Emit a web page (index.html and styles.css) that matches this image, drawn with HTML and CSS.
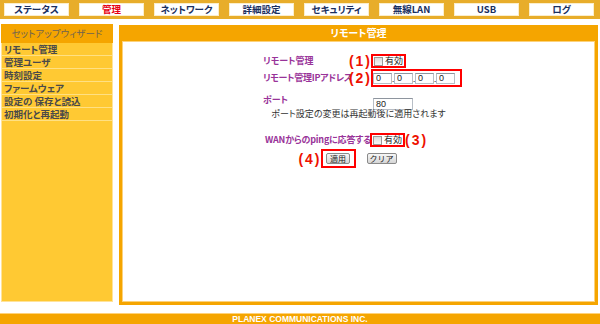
FILE: index.html
```html
<!DOCTYPE html>
<html lang="ja">
<head>
  <meta charset="UTF-8" />
  <title>リモート管理</title>
  <link rel="stylesheet" href="styles.css">
</head>
<body>

  <div class="topnav">
    <a class="tab">ステータス</a>
    <a class="tab active">管理</a>
    <a class="tab">ネットワーク</a>
    <a class="tab">詳細設定</a>
    <a class="tab">セキュリティ</a>
    <a class="tab">無線LAN</a>
    <a class="tab">USB</a>
    <a class="tab">ログ</a>
  </div>

  <div class="wrap">
    <div class="side">
      <div class="side-head">セットアップウィザード</div>
      <ul class="menu">
        <li>リモート管理</li>
        <li>管理ユーザ</li>
        <li>時刻設定</li>
        <li>ファームウェア</li>
        <li>設定の 保存と読込</li>
        <li>初期化と再起動</li>
      </ul>
    </div>

    <div class="panel">
      <div class="panel-head">リモート管理</div>
      <div class="panel-body">
        <form class="form">
          <div class="row r1">
            <label>リモート管理</label>
            <span class="mark">
              <span class="note-num left">(1)</span>
              <input type="checkbox" class="chk" /><span class="chk-label">有効</span>
            </span>
          </div>
          <div class="row r2">
            <label class="ip-label">リモート管理IPアドレス</label>
            <span class="mark ip">
              <span class="note-num left">(2)</span>
              <input type="text" class="txt oct" value="0" /><i>.</i><input type="text" class="txt oct" value="0" /><i>.</i><input type="text" class="txt oct" value="0" /><i>.</i><input type="text" class="txt oct" value="0" />
            </span>
          </div>
          <div class="row r3">
            <label>ポート</label>
            <span><input type="text" class="txt port" value="80" /></span>
          </div>
          <div class="hint">ポート設定の変更は再起動後に適用されます</div>
          <div class="row r4">
            <label class="wan">WANからのpingに応答する</label>
            <span class="mark">
              <input type="checkbox" class="chk" /><span class="chk-label">有効</span>
              <span class="note-num right">(3)</span>
            </span>
          </div>
          <div class="buttons">
            <span class="mark btnmark">
              <span class="note-num left">(4)</span>
              <button type="button" class="btn">適用</button>
            </span>
            <button type="button" class="btn">クリア</button>
          </div>
        </form>
      </div>
    </div>
  </div>

  <div class="footer">PLANEX COMMUNICATIONS INC.</div>

</body>
</html>
```

FILE: styles.css
```css
body {
  margin: 0;
  width: 600px;
  background: #fff;
  font-family: "Noto Sans CJK JP", sans-serif;
  font-feature-settings: "palt";
  color: #333;
}

/* top menu */
.topnav {
  display: flex;
  gap: 10px;
  height: 19px;
  padding: 3px 4px 0;
  box-sizing: border-box;
  background: #e8ad2a;
}

.tab {
  width: 65px;
  height: 13px;
  box-sizing: border-box;
  background: #fff;
  border: 1px solid #fbeecb;
  color: #1a2f60;
  font-size: 9.5px;
  font-weight: bold;
  line-height: 11px;
  text-align: center;
}

.tab.active {
  color: #e60012;
}

.wrap {
  display: flex;
  align-items: flex-start;
  margin-top: 5px;
}

/* left menu */
.side {
  width: 112px;
  height: 278px;
  margin-left: 1px;
  box-sizing: border-box;
  background: #ffc933;
  border: 1px solid #ffe39a;
  border-top: none;
}

.side-head {
  height: 19px;
  margin: 0 -1px;
  background: #f5a500;
  color: #6e6250;
  font-size: 9.5px;
  line-height: 19px;
  text-align: center;
}

.menu {
  list-style: none;
  margin: 0;
  padding: 0;
}

.menu li {
  height: 13px;
  box-sizing: border-box;
  padding-left: 2px;
  border-bottom: 1px solid #ffe083;
  color: #4a4a4a;
  font-size: 9.5px;
  font-weight: bold;
  line-height: 12px;
  overflow: hidden;
}

/* main panel */
.panel {
  width: 479px;
  height: 280px;
  margin: 1px 0 0 6px;
  padding: 0 3px 3px;
  box-sizing: border-box;
  background: #f5a500;
  display: flex;
  flex-direction: column;
}

.panel-head {
  height: 16px;
  color: #fff;
  font-size: 10px;
  font-weight: bold;
  line-height: 15px;
  text-align: center;
}

.panel-body {
  flex: 1;
  background: #fff;
  border: 1px solid #fcd27c;
}

.form {
  padding: 12px 0 0 140px;
}

.row {
  display: grid;
  grid-template-columns: 108px auto;
  align-items: center;
  justify-items: start;
}

.row label {
  color: #993399;
  font-size: 9px;
  font-weight: bold;
  line-height: 12px;
  white-space: nowrap;
}

.row label.ip-label {
  letter-spacing: -0.3px;
}

.r1 { height: 14px; }
.r2 { height: 20px; }
.r3 { height: 17px; }
.r4 { height: 16px; margin-top: 11px; }

.row label.wan {
  padding-left: 2px;
  letter-spacing: -0.2px;
}

.mark {
  position: relative;
  display: inline-flex;
  align-items: center;
  box-sizing: border-box;
  border: 2px solid #ff0000;
  font-size: 9px;
  color: #222;
  white-space: nowrap;
}

.r1 .mark, .r4 .mark {
  height: 14px;
  width: 35px;
  padding-left: 1px;
}

.r4 .mark {
  margin-left: -1px;
}

.chk-label {
  line-height: 10px;
}

.mark.ip {
  height: 18px;
  width: 91px;
  padding-left: 0;
}

.mark.ip i {
  display: inline-block;
  width: 2px;
  font-style: normal;
  font-size: 8px;
  line-height: 8px;
  align-self: flex-end;
  margin-bottom: 2px;
}

.note-num {
  position: absolute;
  top: 50%;
  transform: translateY(-50%);
  color: #ee1100;
  font-family: "Liberation Sans", sans-serif;
  font-size: 14px;
  font-weight: bold;
  line-height: 15px;
  letter-spacing: 2px;
  white-space: nowrap;
}

.note-num.left {
  right: calc(100% + 1px);
}

.note-num.right {
  left: calc(100% + 2px);
}

.chk {
  appearance: none;
  flex: none;
  width: 9px;
  height: 9px;
  margin: 0 2px 0 0;
  border: 1px solid #9a9a9a;
  background: linear-gradient(#dcdcdc, #f8f8f8);
}

.txt {
  height: 11px;
  box-sizing: border-box;
  margin: 0;
  padding: 0 2px;
  border: 1px solid #b8bec6;
  border-top-color: #8e959e;
  font-family: "Liberation Sans", sans-serif;
  font-size: 9px;
  color: #222;
}

.txt.oct {
  width: 19px;
}

.txt.port {
  width: 40px;
  height: 12px;
  margin-left: 2px;
}

.hint {
  height: 15px;
  margin-left: -140px;
  margin-top: 1px;
  font-size: 9px;
  line-height: 15px;
  color: #333;
  text-align: center;
}

.buttons {
  display: flex;
  align-items: center;
  justify-content: center;
  gap: 11px;
  height: 19px;
  margin: 1px 0 0 -140px;
}

.btnmark {
  width: 35px;
  height: 19px;
  justify-content: center;
}

.btn {
  height: 11px;
  box-sizing: border-box;
  margin: 0;
  padding: 0 2px;
  border: 1px solid #8a8a8a;
  border-radius: 2px;
  background: linear-gradient(#f6f6f6, #d6d6d6);
  font-family: "Noto Sans CJK JP", sans-serif;
  font-size: 8px;
  line-height: 9px;
  color: #222;
  white-space: nowrap;
}

.btnmark .btn {
  width: 24px;
}

.footer {
  height: 11px;
  margin-top: 8px;
  box-sizing: border-box;
  background: #f5a500;
  border-top: 1px solid #ffd27a;
  color: #fff;
  font-family: "Liberation Sans", sans-serif;
  font-size: 8.5px;
  font-weight: bold;
  line-height: 10px;
  text-align: center;
}
```
